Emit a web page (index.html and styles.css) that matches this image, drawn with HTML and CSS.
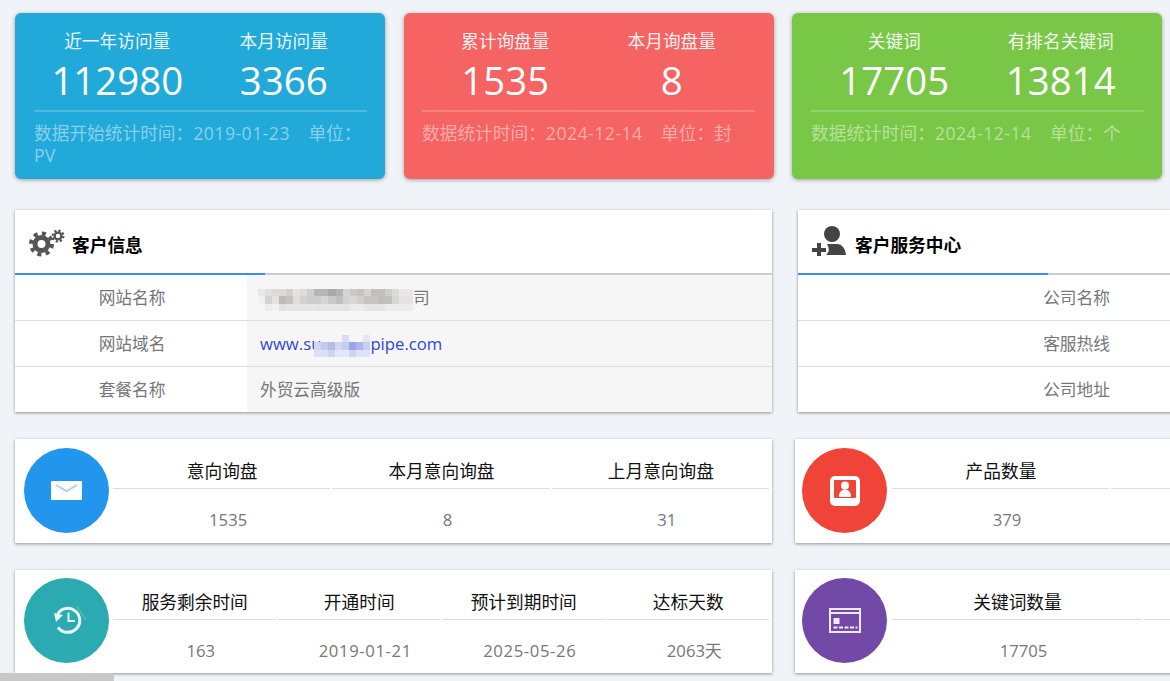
FILE: index.html
```html
<!DOCTYPE html>
<html lang="zh-CN">
<head>
  <meta charset="UTF-8">
  <title>客户中心</title>
  <link rel="stylesheet" href="styles.css">
</head>
<body>

<div class="page">

  <div class="summary-row">
    <div class="summary blue">
      <div class="summary-nums">
        <div class="num-col"><p>近一年访问量</p><strong>112980</strong></div>
        <div class="num-col"><p>本月访问量</p><strong>3366</strong></div>
      </div>
      <div class="summary-foot">数据开始统计时间：<span class="date">2019-01-23</span> &nbsp;&nbsp; 单位：<span>PV</span></div>
    </div>
    <div class="summary red">
      <div class="summary-nums">
        <div class="num-col"><p>累计询盘量</p><strong>1535</strong></div>
        <div class="num-col"><p>本月询盘量</p><strong>8</strong></div>
      </div>
      <div class="summary-foot">数据统计时间：<span class="date">2024-12-14</span> &nbsp;&nbsp; 单位：封</div>
    </div>
    <div class="summary green">
      <div class="summary-nums">
        <div class="num-col"><p>关键词</p><strong>17705</strong></div>
        <div class="num-col"><p>有排名关键词</p><strong>13814</strong></div>
      </div>
      <div class="summary-foot">数据统计时间：<span class="date">2024-12-14</span> &nbsp;&nbsp; 单位：个</div>
    </div>
  </div>

  <div class="panel-row">
    <div class="panel">
      <div class="panel-head">
        <svg class="head-icon gear-icon" width="36" height="28" viewBox="0 0 36 28">
          <g fill="none" stroke="#555">
            <circle cx="12.500" cy="15" r="6.500" stroke-width="5"/>
            <circle cx="12.500" cy="15" r="10.500" stroke-width="4" stroke-dasharray="4 4.250"/>
            <circle cx="29" cy="7" r="3.400" stroke-width="2.400"/>
            <circle cx="29" cy="7" r="5.400" stroke-width="2.200" stroke-dasharray="2.200 2"/>
          </g>
        </svg>
        <h3>客户信息</h3>
      </div>
      <div class="info-row">
        <div class="info-label">网站名称</div>
        <div class="info-value">
          <svg class="mosaic" width="155" height="22" viewBox="0 0 22 3" shape-rendering="crispEdges" preserveAspectRatio="none">
            <rect x="0" y="0" width="1" height="1" fill="#e8e8e7"/><rect x="1" y="0" width="1" height="1" fill="#e0dfde"/><rect x="2" y="0" width="2" height="1" fill="#dcdbda"/><rect x="4" y="0" width="1" height="1" fill="#d2d1d0"/><rect x="5" y="0" width="1" height="1" fill="#e4e3e2"/><rect x="6" y="0" width="1" height="1" fill="#dddcdb"/><rect x="7" y="0" width="1" height="1" fill="#d0cfce"/><rect x="8" y="0" width="2" height="1" fill="#b8b6b4"/><rect x="10" y="0" width="1" height="1" fill="#a9a8a7"/><rect x="11" y="0" width="1" height="1" fill="#b4b3b2"/><rect x="12" y="0" width="1" height="1" fill="#d4d6d8"/><rect x="13" y="0" width="1" height="1" fill="#cfc8c1"/><rect x="14" y="0" width="1" height="1" fill="#c8c3be"/><rect x="15" y="0" width="1" height="1" fill="#d4d4d4"/><rect x="16" y="0" width="2" height="1" fill="#c2c0be"/><rect x="18" y="0" width="1" height="1" fill="#cdcccb"/><rect x="19" y="0" width="1" height="1" fill="#dadad9"/><rect x="20" y="0" width="2" height="1" fill="#e8e8e7"/>
            <rect x="0" y="1" width="1" height="1" fill="#f0f0ef"/><rect x="1" y="1" width="1" height="1" fill="#d4d3d2"/><rect x="2" y="1" width="1" height="1" fill="#e2e2e1"/><rect x="3" y="1" width="1" height="1" fill="#bdbbb9"/><rect x="4" y="1" width="1" height="1" fill="#c4c3c2"/><rect x="5" y="1" width="1" height="1" fill="#e0dfde"/><rect x="6" y="1" width="1" height="1" fill="#d2d1d0"/><rect x="7" y="1" width="2" height="1" fill="#cdcdcc"/><rect x="9" y="1" width="1" height="1" fill="#d4d6d8"/><rect x="10" y="1" width="1" height="1" fill="#c9cacb"/><rect x="11" y="1" width="1" height="1" fill="#bfbfbf"/><rect x="12" y="1" width="1" height="1" fill="#d0d2d5"/><rect x="13" y="1" width="1" height="1" fill="#d8d8d8"/><rect x="14" y="1" width="1" height="1" fill="#cfcfcf"/><rect x="15" y="1" width="2" height="1" fill="#c6c5c4"/><rect x="17" y="1" width="2" height="1" fill="#c0bfbe"/><rect x="19" y="1" width="1" height="1" fill="#d6d6d6"/><rect x="20" y="1" width="2" height="1" fill="#e4e4e4"/>
            <rect x="1" y="2" width="1" height="1" fill="#ececec"/><rect x="2" y="2" width="1" height="1" fill="#f2f2f2"/><rect x="3" y="2" width="1" height="1" fill="#e2e2e2"/><rect x="4" y="2" width="4" height="1" fill="#e6e6e6"/><rect x="8" y="2" width="5" height="1" fill="#e4e4e4"/><rect x="13" y="2" width="2" height="1" fill="#ebebeb"/><rect x="15" y="2" width="3" height="1" fill="#e6e6e6"/><rect x="18" y="2" width="4" height="1" fill="#ececec"/>
          </svg>司
        </div>
      </div>
      <div class="info-row">
        <div class="info-label">网站域名</div>
        <div class="info-value"><a href="#">www.su<svg class="mosaic link-mosaic" width="56" height="22" viewBox="0 0 8 3" shape-rendering="crispEdges" preserveAspectRatio="none">
            <rect x="4" y="0" width="1" height="1" fill="#d8dcf3"/>
            <rect x="7" y="0" width="1" height="1" fill="#e4e7f7"/>
            <rect x="0" y="1" width="1" height="1" fill="#d0d5f2"/>
            <rect x="1" y="1" width="1" height="1" fill="#c4caee"/>
            <rect x="2" y="1" width="1" height="1" fill="#b4bcea"/>
            <rect x="3" y="1" width="1" height="1" fill="#d2d7f2"/>
            <rect x="4" y="1" width="1" height="1" fill="#c6cdef"/>
            <rect x="5" y="1" width="1" height="1" fill="#97a6e6"/>
            <rect x="6" y="1" width="1" height="1" fill="#adb7ea"/>
            <rect x="7" y="1" width="1" height="1" fill="#c8cef0"/>
            <rect x="0" y="2" width="2" height="1" fill="#dde0f5"/>
            <rect x="2" y="2" width="1" height="1" fill="#d0d5f2"/>
            <rect x="3" y="2" width="2" height="1" fill="#e4e7f7"/>
            <rect x="5" y="2" width="1" height="1" fill="#ced4f2"/>
            <rect x="6" y="2" width="2" height="1" fill="#dfe2f6"/>
          </svg>pipe.com</a></div>
      </div>
      <div class="info-row">
        <div class="info-label">套餐名称</div>
        <div class="info-value">外贸云高级版</div>
      </div>
    </div>

    <div class="panel service">
      <div class="panel-head">
        <svg class="head-icon" width="34" height="30" viewBox="0 0 34 30">
          <g fill="#444">
            <circle cx="20" cy="8" r="8"/>
            <path d="M15 18h10c5 0 8 4 9 11H14c3-3 4-5 1-11z"/>
            <rect x="0" y="22" width="14" height="4"/>
            <rect x="5" y="17" width="4" height="13"/>
          </g>
        </svg>
        <h3>客户服务中心</h3>
      </div>
      <div class="info-row"><div class="info-label">公司名称</div></div>
      <div class="info-row"><div class="info-label">客服热线</div></div>
      <div class="info-row"><div class="info-label">公司地址</div></div>
    </div>
  </div>

  <div class="stat-row">
    <div class="stat">
      <div class="stat-circle c-blue">
        <svg width="31" height="19" viewBox="0 0 31 19">
          <rect width="31" height="19" rx="1" fill="#fff"/>
          <path d="M5 4l10.500 6L26 4" fill="none" stroke="#a8d2f7" stroke-width="2"/>
        </svg>
      </div>
      <div class="stat-cols">
        <div class="stat-col"><h4>意向询盘</h4><p>1535</p></div>
        <div class="stat-col"><h4>本月意向询盘</h4><p>8</p></div>
        <div class="stat-col"><h4>上月意向询盘</h4><p>31</p></div>
      </div>
    </div>
    <div class="stat stat-right">
      <div class="stat-circle c-red">
        <svg width="30" height="30" viewBox="0 0 30 30">
          <rect width="30" height="30" rx="5" fill="#fff"/>
          <rect x="4" y="4" width="22" height="18" rx="1" fill="#ef4437"/>
          <circle cx="15" cy="9.500" r="4" fill="#fff"/>
          <path d="M9 20c0-4 3-6.500 6-6.500s6 2.500 6 6.500c0 .7-.5 1-1 1H10c-.5 0-1-.3-1-1z" fill="#fff"/>
        </svg>
      </div>
      <div class="stat-cols col-217">
        <div class="stat-col"><h4>产品数量</h4><p>379</p></div>
        <div class="stat-col"><h4>&nbsp;</h4><p>&nbsp;</p></div>
      </div>
    </div>
  </div>

  <div class="stat-row stat-row-last">
    <div class="stat">
      <div class="stat-circle c-teal">
        <svg class="history" width="36" height="36" viewBox="0 0 36 36">
          <g fill="none" stroke="#e8f6f6">
            <path d="M7.600 11A12 12 0 1 1 8 24.300" stroke-width="3"/>
            <path d="M18.500 9.500V18H25" stroke-width="2"/>
            <path d="M27 3l9 14" stroke="#6cc2c6" stroke-width="1"/>
          </g>
          <path d="M4 10l9 2-7 7z" fill="#e8f6f6"/>
        </svg>
      </div>
      <div class="stat-cols cols-4">
        <div class="stat-col"><h4>服务剩余时间</h4><p>163</p></div>
        <div class="stat-col"><h4>开通时间</h4><p class="date">2019-01-21</p></div>
        <div class="stat-col"><h4>预计到期时间</h4><p class="date">2025-05-26</p></div>
        <div class="stat-col"><h4>达标天数</h4><p>2063天</p></div>
      </div>
    </div>
    <div class="stat stat-right">
      <div class="stat-circle c-purple">
        <svg width="32" height="25" viewBox="0 0 32 25">
          <rect x="1" y="1" width="30" height="23" fill="none" stroke="#f0e9f7" stroke-width="2"/>
          <rect x="1" y="4" width="30" height="2" fill="#f0e9f7"/>
          <rect x="4.500" y="10" width="6" height="6" fill="#f0e9f7"/>
          <path d="M4.500 19.500h24" stroke="#f0e9f7" stroke-width="2" stroke-dasharray="4 1.500"/>
        </svg>
      </div>
      <div class="stat-cols col-250">
        <div class="stat-col"><h4>关键词数量</h4><p>17705</p></div>
        <div class="stat-col"><h4>&nbsp;</h4><p>&nbsp;</p></div>
      </div>
    </div>
  </div>

</div>

<div class="scroll-thumb"></div>

</body>
</html>
```

FILE: styles.css
```css
* { box-sizing: border-box; }
html, body { height: 100%; }
body { margin: 0; background: #f0f3f8; overflow: hidden; font-family: "Open Sans", "Noto Sans CJK SC", sans-serif; color: #777; }
p, h3, h4 { margin: 0; font-weight: normal; }

.page { padding: 13px 0 0 15px; width: 2000px; }

/* top coloured cards */
.summary-row { display: flex; gap: 18.5px; }
.summary { flex: none; width: 370px; height: 166px; padding: 14px 18px 0 19px; border-radius: 6px; color: #fff; box-shadow: 0 1px 4px rgba(0,0,0,.35); }
.summary.blue { background: #21a9da; }
.summary.red { background: #f56363; padding-left: 18.5px; padding-right: 18.5px; }
.summary.green { background: #78c746; }
.summary-nums { display: flex; height: 85px; border-bottom: 2px solid rgba(255,255,255,.2); }
.num-col { flex: 1; text-align: center; }
.num-col p { font-size: 17.7px; line-height: 28px; opacity: .9; }
.num-col strong { display: block; font-size: 38.4px; font-weight: normal; line-height: 51px; }
.summary-foot { margin-top: 10px; font-size: 17.7px; line-height: 22px; color: rgba(255,255,255,.48); }
.summary-foot .date { letter-spacing: .45px; }

/* info panels */
.panel-row { display: flex; gap: 26px; margin-top: 31px; }
.panel { flex: none; width: 757px; background: #fff; box-shadow: 0 1px 3px rgba(0,0,0,.4); }
.panel-head { position: relative; display: flex; align-items: center; gap: 7px; height: 65px; padding: 0 0 2px 14px; border-bottom: 2px solid #ccc; }
.panel-head::after { content: ""; position: absolute; left: 0; bottom: -2px; width: 250px; height: 2px; background: #3c8bf0; }
.panel-head h3 { padding-top: 6px; font-size: 17.7px; font-weight: bold; color: #000; }
.gear-icon { margin-top: 4px; }
.service .head-icon { margin-right: 2px; }
.info-row { display: flex; height: 46px; border-bottom: 1px solid #ddd; font-size: 16.7px; }
.info-row:last-child { height: 45px; border-bottom: 0; }
.info-label { flex: none; width: 232px; padding-left: 2px; line-height: 45px; text-align: center; }
.service .info-label { width: 556px; padding-left: 1px; }
.info-value { flex: 1; padding-left: 13px; line-height: 45px; background: #f6f6f6; white-space: nowrap; }
.info-value a { color: #3344dd; text-decoration: none; }
.mosaic { margin-left: -2px; vertical-align: middle; }
.link-mosaic { margin-left: -7px; }

/* stat cards */
.stat-row { display: flex; gap: 23px; margin-top: 27px; }
.stat { flex: none; width: 757px; height: 104px; display: flex; background: #fff; box-shadow: 0 1px 3px rgba(0,0,0,.4); }
.stat-right { width: 900px; }
.stat-circle { flex: none; display: flex; align-items: center; justify-content: center; width: 85px; height: 85px; margin: 9px 4px 0 9px; border-radius: 50%; }
.stat-right .stat-circle { margin-right: 5px; margin-left: 7px; }
.stat-row-last .stat { height: 103px; }
.stat-row-last .stat-circle { margin-top: 8px; }
.c-blue { background: #2196ec; }
.c-red { background: #ef4437; }
.c-teal { background: #2babb1; }
.c-purple { background: #7349a8; }
.history { margin-left: 2px; overflow: visible; }
.stat-cols { display: grid; width: 656px; grid-template-columns: repeat(3, 1fr); column-gap: 2px; }
.cols-4 { grid-template-columns: repeat(4, 1fr); }
.stat-right .stat-cols { width: auto; }
.col-217 { grid-template-columns: repeat(2, 217px); }
.col-250 { grid-template-columns: repeat(2, 250px); }
.stat-col { text-align: center; }
.stat-col h4 { height: 50px; padding: 20px 0 0 1px; font-size: 17.7px; line-height: 25px; color: #111; white-space: nowrap; border-bottom: 1px solid #ddd; }
.stat-col p { padding: 19px 0 0 13px; font-size: 16.7px; line-height: 24px; }
.stat-col .date { letter-spacing: .6px; }

.scroll-thumb { position: fixed; left: 0; bottom: 0; width: 114px; height: 8px; background: #c8c8c8; border-top-right-radius: 2px; }
```
